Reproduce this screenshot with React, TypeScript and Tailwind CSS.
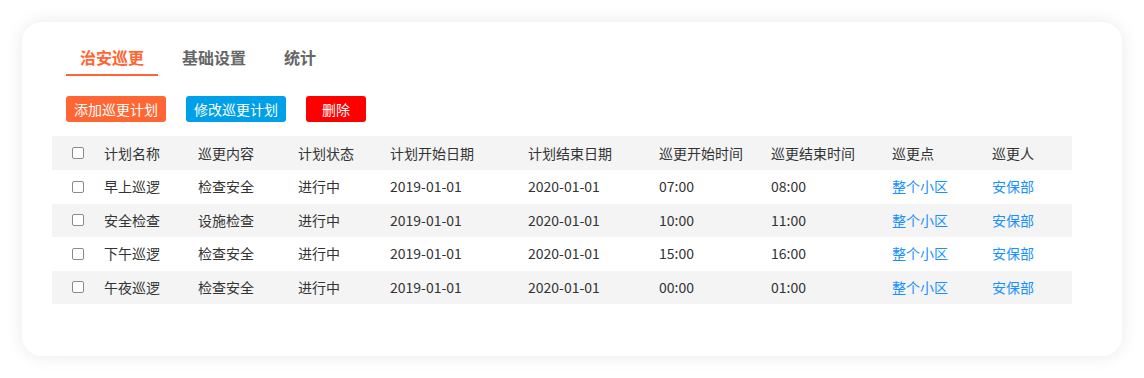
import * as React from "react";

const FONT = "font-['Microsoft_YaHei','Noto_Sans_CJK_SC',sans-serif]";

const COLS = "grid grid-cols-[52px_94px_100px_92px_138px_131px_112px_121px_100px_80px] items-center";

const HEAD = ["计划名称", "巡更内容", "计划状态", "计划开始日期", "计划结束日期", "巡更开始时间", "巡更结束时间", "巡更点", "巡更人"];

const ROWS = [
  ["早上巡逻", "检查安全", "进行中", "2019-01-01", "2020-01-01", "07:00", "08:00"],
  ["安全检查", "设施检查", "进行中", "2019-01-01", "2020-01-01", "10:00", "11:00"],
  ["下午巡逻", "检查安全", "进行中", "2019-01-01", "2020-01-01", "15:00", "16:00"],
  ["午夜巡逻", "检查安全", "进行中", "2019-01-01", "2020-01-01", "00:00", "01:00"],
];

function Box() {
  return (
    <span className="ml-[20px] block size-[12px] rounded-[2px] border border-[#8a8a8a] bg-white" />
  );
}

export default function App() {
  const [tab, setTab] = React.useState(0);
  const tabs = ["治安巡更", "基础设置", "统计"];
  return (
    <div className={`h-[378px] w-[1144px] bg-white p-[22px] ${FONT}`}>
      <div className="h-[334px] w-[1100px] rounded-[20px] bg-white pt-[18px] shadow-[0_0_18px_rgba(0,0,0,0.09)]">
        {/* tabs */}
        <div className="ml-[44px] flex gap-[10px]">
          {tabs.map((t, i) => (
            <button
              key={t}
              type="button"
              onClick={() => setTab(i)}
              className={`h-[36px] border-b-2 px-[14px] text-[16px] font-bold leading-[28px] ${
                tab === i ? "border-[#ff6633] text-[#ff6633]" : "border-transparent text-[#666]"
              }`}
            >
              {t}
            </button>
          ))}
        </div>

        {/* actions */}
        <div className="ml-[44px] mt-[20px] flex gap-[20px]">
          <button type="button" className="h-[26px] w-[100px] rounded-[3px] bg-[#ff6633] text-[14px] text-white">
            添加巡更计划
          </button>
          <button type="button" className="h-[26px] w-[100px] rounded-[3px] bg-[#00a0e9] text-[14px] text-white">
            修改巡更计划
          </button>
          <button type="button" className="h-[26px] w-[60px] rounded-[3px] bg-[#ff0000] text-[14px] text-white">
            删除
          </button>
        </div>

        {/* table */}
        <div className="ml-[30px] mt-[14px] w-[1020px] text-[14px] text-[#333]">
          <div className={`${COLS} h-[34px] bg-[#f4f4f4]`}>
            <Box />
            {HEAD.map((h) => (
              <span key={h}>{h}</span>
            ))}
          </div>
          {ROWS.map((r, i) => (
            <div key={i} className={`${COLS} h-[33.5px] ${i % 2 === 1 ? "bg-[#f4f4f4]" : "bg-white"}`}>
              <Box />
              {r.map((c, j) => (
                <span key={j}>{c}</span>
              ))}
              <a className="text-[#1890ff]">整个小区</a>
              <a className="text-[#1890ff]">安保部</a>
            </div>
          ))}
        </div>
      </div>
    </div>
  );
}
